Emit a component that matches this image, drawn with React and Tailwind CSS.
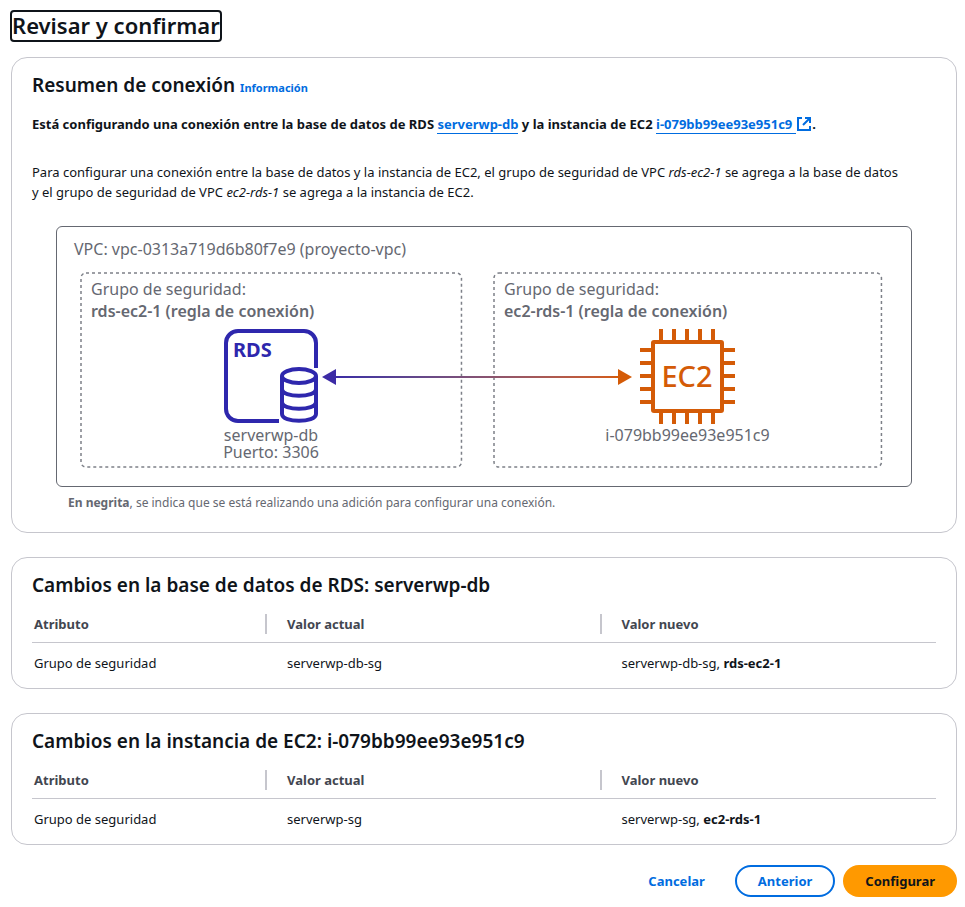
import React from "react";

const link = "text-[#006ce0]";

function Card({ children, className = "" }) {
  return (
    <section className={`rounded-2xl border border-[#c6c6cd] bg-white px-5 ${className}`}>
      {children}
    </section>
  );
}

function ExternalIcon() {
  return (
    <svg className="inline-block size-4 align-[-3px]" viewBox="0 0 16 16" fill="none" stroke="currentColor" strokeWidth="2" aria-hidden="true">
      <path d="M6 2H2v12h12v-4" />
      <path d="M9 2h5v5M14 2 7 9" />
    </svg>
  );
}

function RdsIcon() {
  return (
    <svg className="h-[95px] w-[95px]" viewBox="0 0 95 95" fill="none" stroke="#2e27ad" strokeWidth="4" role="img" aria-label="RDS">
      <path d="M55 92H14A12 12 0 0 1 2 80V14A12 12 0 0 1 14 2H80A12 12 0 0 1 92 14V39" />
      <text x="9" y="28" fill="#2e27ad" stroke="none" fontFamily="Noto Sans, sans-serif" fontSize="20" fontWeight="700">RDS</text>
      <ellipse cx="75" cy="47" rx="17" ry="7" />
      <path d="M58 47V85C58 94 92 94 92 85V47M58 60C58 69 92 69 92 60M58 73C58 82 92 82 92 73" />
    </svg>
  );
}

function Ec2Icon() {
  const pins = [21, 34, 47, 60, 73];
  return (
    <svg className="h-[95px] w-[95px]" viewBox="0 0 95 95" fill="none" stroke="#d45b07" strokeWidth="4" role="img" aria-label="EC2">
      <rect x="13" y="13" width="69" height="69" rx="1" />
      {pins.map((p) => (
        <path key={p} d={`M${p} 0V12M${p} 83V95M0 ${p}H12M83 ${p}H95`} />
      ))}
      <text x="47" y="58" textAnchor="middle" fill="#d45b07" stroke="none" fontFamily="Noto Sans, sans-serif" fontSize="29" fontWeight="500">EC2</text>
    </svg>
  );
}

function SecurityGroup({ name, icon, children }) {
  return (
    <div className="relative px-[11px] pt-[6px]">
      <svg className="absolute inset-0 h-full w-full overflow-visible" fill="none" stroke="#7d8088" strokeWidth="1.5" strokeDasharray="3 3" aria-hidden="true">
        <rect x="1" y="1" width="99.6%" height="99%" rx="5" />
      </svg>
      <p>Grupo de seguridad:</p>
      <p className="font-semibold">{name}</p>
      <div className="mt-[7px] flex flex-col items-center text-center leading-[17px]">
        {icon}
        {children}
      </div>
    </div>
  );
}

function ConnectionArrow() {
  return (
    <div className="absolute top-[97px] right-[calc(24%+58px)] left-[calc(24%+50px)] flex items-center">
      <svg className="h-4 w-[14px]" viewBox="0 0 14 16" aria-hidden="true"><path d="M0 8 14 0V16Z" fill="#3c2ba5" /></svg>
      <div className="h-[2px] flex-1 bg-linear-to-r from-[#3c2ba5] to-[#d45b07]" />
      <svg className="h-4 w-[14px]" viewBox="0 0 14 16" aria-hidden="true"><path d="M14 8 0 0V16Z" fill="#d45b07" /></svg>
    </div>
  );
}

function ChangesCard({ title, current, added }) {
  return (
    <Card className="mt-6 pt-3 pb-[5px]">
      <h2 className="text-[19px] leading-[30px] font-semibold">{title}</h2>
      <table className="w-full table-fixed text-left text-[13px] leading-5">
        <colgroup>
          <col className="w-[26%]" />
          <col className="w-[37%]" />
          <col />
        </colgroup>
        <thead className="text-[#424650]">
          <tr className="border-b border-[#c6c6cd]">
            {["Atributo", "Valor actual", "Valor nuevo"].map((h, i) => (
              <th key={h} scope="col" className="pt-[14px] pb-2 font-bold">
                <div className={i === 2 ? "pl-5" : i === 1 ? "border-r-2 border-[#c6c6cd] pl-5" : "border-r-2 border-[#c6c6cd] pl-[2px]"}>{h}</div>
              </th>
            ))}
          </tr>
        </thead>
        <tbody>
          <tr>
            <td className="py-[10px] pl-[2px]">Grupo de seguridad</td>
            <td className="py-[10px] pl-5">{current}</td>
            <td className="py-[10px] pl-5">{current}, <b>{added}</b></td>
          </tr>
        </tbody>
      </table>
    </Card>
  );
}

export default function App() {
  return (
    <main className="bg-white pt-[10px] pr-2 pb-[10px] pl-[11px] font-['Noto_Sans',sans-serif] text-[13px] leading-5 text-[#0f141a]">
      <h1 className="-ml-px w-fit rounded-[4px] border-2 border-[#0f141a] pb-[2px] text-[22px] leading-[26px] font-semibold">Revisar y confirmar</h1>

      <Card className="mt-[15px] pt-3 pb-[19px]">
        <h2 className="text-[19px] leading-[30px] font-semibold">
          Resumen de conexión <a href="#info" className={`text-[11px] leading-none font-bold ${link}`}>Información</a>
        </h2>
        <p className="mt-[14px] font-bold">
          Está configurando una conexión entre la base de datos de RDS{" "}
          <a href="#db" className={`border-b border-current ${link}`}>serverwp-db</a> y la instancia de EC2{" "}
          <a href="#ec2" className={link}><span className="border-b border-current pr-1">i-079bb99ee93e951c9</span><ExternalIcon /></a>.
        </p>
        <p className="mt-7 pr-8">
          Para configurar una conexión entre la base de datos y la instancia de EC2, el grupo de seguridad de VPC <i>rds-ec2-1</i> se agrega a la base de datos y el grupo de seguridad de VPC <i>ec2-rds-1</i> se agrega a la instancia de EC2.
        </p>

        <div className="mx-6 mt-6 rounded-md border border-[#656871] pr-[29px] pb-[18px] pl-[23px] text-[16px] leading-[22px] text-[#656871]">
          <p className="-ml-[6px] pt-[11px] pb-3">VPC: vpc-0313a719d6b80f7e9 (proyecto-vpc)</p>
          <div className="relative grid h-[196px] grid-cols-[382fr_389fr] gap-[31px]">
            <SecurityGroup name="rds-ec2-1 (regla de conexión)" icon={<RdsIcon />}>
              <p className="pt-[3px]">serverwp-db</p>
              <p>Puerto: 3306</p>
            </SecurityGroup>
            <SecurityGroup name="ec2-rds-1 (regla de conexión)" icon={<Ec2Icon />}>
              <p className="pt-[3px]">i-079bb99ee93e951c9</p>
            </SecurityGroup>
            <ConnectionArrow />
          </div>
        </div>
        <p className="mt-[6px] ml-9 text-[12px] text-[#656871]"><b>En negrita</b>, se indica que se está realizando una adición para configurar una conexión.</p>
      </Card>

      <ChangesCard title="Cambios en la base de datos de RDS: serverwp-db" current="serverwp-db-sg" added="rds-ec2-1" />
      <ChangesCard title="Cambios en la instancia de EC2: i-079bb99ee93e951c9" current="serverwp-sg" added="ec2-rds-1" />

      <div className="mt-5 flex justify-end gap-2 font-bold">
        <button type="button" className={`h-8 px-[22px] ${link}`}>Cancelar</button>
        <button type="button" className={`h-8 rounded-full border-2 border-[#006ce0] px-[21px] ${link}`}>Anterior</button>
        <button type="button" className="h-8 rounded-full bg-[#ff9900] px-[22px]">Configurar</button>
      </div>
    </main>
  );
}
